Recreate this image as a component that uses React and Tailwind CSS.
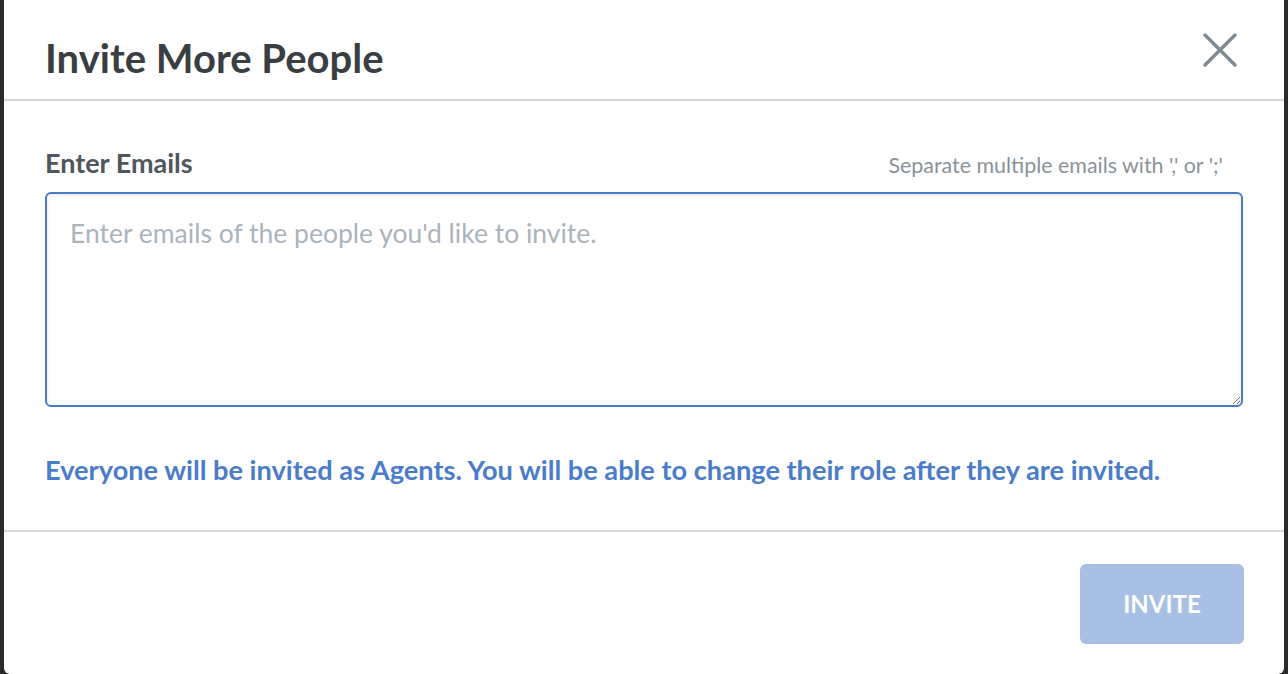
import { useState } from 'react';

export default function App() {
  const [emails, setEmails] = useState('');

  return (
    <div className="w-[1288px] h-[674px] bg-[#2b2b2b] px-[4px] overflow-hidden" style={{ fontFamily: 'Lato, "Open Sans", sans-serif' }}>
      <div className="bg-white h-full rounded-b-[6px] flex flex-col">
        {/* Header */}
        <div className="h-[101px] border-b-2 border-[#d9d9d9] flex items-center justify-between pl-[41px] pr-[46px] pt-[16px]">
          <h1 className="text-[40px] leading-none font-bold text-[#3a3e43]">Invite More People</h1>
          <button className="text-[#7e8a91] -mt-[16px]">
            <svg width="36" height="36" viewBox="0 0 36 36" fill="none" stroke="currentColor" strokeWidth="3.4" strokeLinecap="round">
              <path d="M3 3L33 33M33 3L3 33" />
            </svg>
          </button>
        </div>

        {/* Body */}
        <div className="px-[41px] pt-[46px] pb-[44px] border-b-2 border-[#d9d9d9]">
          <div className="flex items-baseline justify-between h-[32px]">
            <label className="text-[27px] leading-[32px] font-bold text-[#50565c]">Enter Emails</label>
            <span className="text-[21.4px] leading-[32px] text-[#8a9298] mr-[20px]">Separate multiple emails with ',' or ';'</span>
          </div>
          <textarea
            value={emails}
            onChange={(e) => setEmails(e.target.value)}
            placeholder="Enter emails of the people you'd like to invite."
            className="mt-[13px] w-full h-[215px] block border-2 border-[#4a7bc8] rounded-[6px] px-[23px] pt-[23px] text-[26.5px] leading-[32px] text-[#3a3e43] placeholder-[#abb3bb] shadow-[inset_0_2px_4px_rgba(0,0,0,0.08)] outline-none"
          />
          <p className="mt-[47px] text-[27.2px] leading-[32px] font-bold text-[#4a7cc9]">
            Everyone will be invited as Agents. You will be able to change their role after they are invited.
          </p>
        </div>

        {/* Footer */}
        <div className="flex justify-end pr-[40px] pt-[32px]">
          <button className="w-[164px] h-[80px] rounded-[6px] bg-[#a8bfe4] text-white text-[24px] font-bold">INVITE</button>
        </div>
      </div>
    </div>
  );
}
